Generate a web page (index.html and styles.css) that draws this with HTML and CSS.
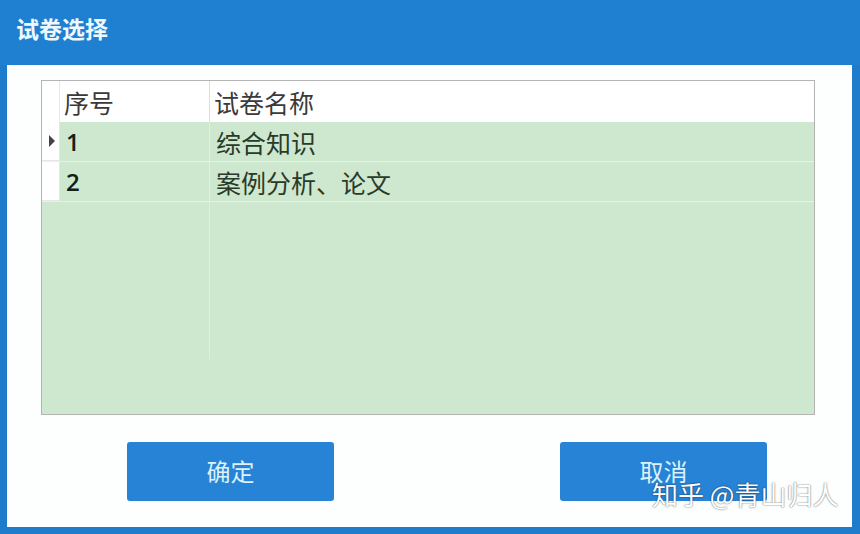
FILE: index.html
```html
<!DOCTYPE html>
<html lang="zh-CN">
<head>
<meta charset="utf-8">
<link rel="stylesheet" href="styles.css">
</head>
<body>
<div class="window">
  <div class="titlebar">试卷选择</div>
  <div class="content">
    <div class="grid">
      <div class="row head">
        <div class="rh"></div>
        <div class="c1">序号</div>
        <div class="c2">试卷名称</div>
      </div>
      <div class="row data">
        <div class="rh"><span class="tri"></span></div>
        <div class="c1 num">1</div>
        <div class="c2">综合知识</div>
      </div>
      <div class="row data">
        <div class="rh"></div>
        <div class="c1 num">2</div>
        <div class="c2">案例分析、论文</div>
      </div>
      <div class="empty">
        <div class="rh"></div>
        <div class="c1 colline"></div>
        <div class="c2"></div>
      </div>
    </div>
    <div class="buttons">
      <div class="btn ok">确定</div>
      <div class="btn cancel">取消</div>
    </div>
    <div class="watermark">知乎 @青山归人</div>
  </div>
</div>
</body>
</html>
```
FILE: styles.css
```css
html, body {
  margin: 0;
  padding: 0;
}
body {
  font-family: "Noto Sans CJK SC", "Noto Sans", sans-serif;
  width: 860px;
  height: 534px;
  overflow: hidden;
}
.window {
  width: 860px;
  height: 534px;
  background: #1f7ccc;
  display: flex;
  flex-direction: column;
  box-sizing: border-box;
}
.titlebar {
  height: 65px;
  flex: none;
  display: flex;
  align-items: center;
  padding-left: 16px;
  padding-bottom: 10px;
  box-sizing: border-box;
  color: #eef8ff;
  font-size: 23px;
  font-weight: bold;
  background: #1f80d2;
}
.content {
  position: relative;
  flex: 1;
  margin: 0 8px 7px 7px;
  background: #fdfefe;
  padding: 15px 0 0 34px;
  box-sizing: border-box;
}
.grid {
  width: 774px;
  height: 335px;
  border: 1px solid #b4b4b4;
  box-sizing: border-box;
  display: flex;
  flex-direction: column;
  background: #cde8cf;
}
.row {
  display: flex;
  height: 40px;
  flex: none;
}
.row.head {
  height: 41px;
  background: #ffffff;
  color: #3a3a3a;
}
.row.data {
  border-bottom: 1px solid #e4f3e4;
  box-sizing: border-box;
  color: #1c2a1c;
}
.rh {
  width: 18px;
  flex: none;
  background: #ffffff;
  border-right: 1px solid #e6e6e6;
  border-bottom: 1px solid #e6e6e6;
  box-sizing: border-box;
  display: flex;
  align-items: center;
  justify-content: center;
}
.head .rh {
  border-bottom: none;
}
.c1 {
  width: 150px;
  flex: none;
  border-right: 1px solid #e2efe2;
  box-sizing: border-box;
  display: flex;
  align-items: center;
  padding-left: 4px;
  font-size: 25px;
}
.head .c1 {
  border-right: 1px solid #dedede;
}
.c2 {
  flex: 1;
  display: flex;
  align-items: center;
  padding-left: 4px;
  font-size: 25px;
}
.num {
  font-family: "Open Sans", "Noto Sans", sans-serif;
  font-weight: 600;
  font-size: 24px;
  padding-left: 6px;
  color: #142014;
}
.data .c2 {
  padding-left: 6px;
  color: #2a3a2a;
}
.tri {
  width: 0;
  height: 0;
  border-top: 6px solid transparent;
  border-bottom: 6px solid transparent;
  border-left: 6px solid #444;
  margin-left: 2px;
}
.empty {
  flex: 1;
  display: flex;
}
.empty .rh {
  background: transparent;
  border: none;
}
.empty .c1 {
  border-right: 1px solid #dff0df;
  margin-bottom: 55px;
}
.buttons {
  display: flex;
  margin-top: 27px;
  padding-left: 86px;
  gap: 226px;
}
.btn {
  width: 207px;
  height: 59px;
  background: #2783d5;
  border-radius: 3px;
  color: #dcf1fa;
  font-size: 24px;
  display: flex;
  align-items: center;
  justify-content: center;
  padding-bottom: 2px;
  box-sizing: border-box;
}
.watermark {
  position: absolute;
  left: 645px;
  top: 410px;
  color: #ffffff;
  font-size: 26px;
  text-shadow: 0 0 2px rgba(0,0,0,0.45), 0 0 1px rgba(0,0,0,0.4);
  white-space: nowrap;
}
```
